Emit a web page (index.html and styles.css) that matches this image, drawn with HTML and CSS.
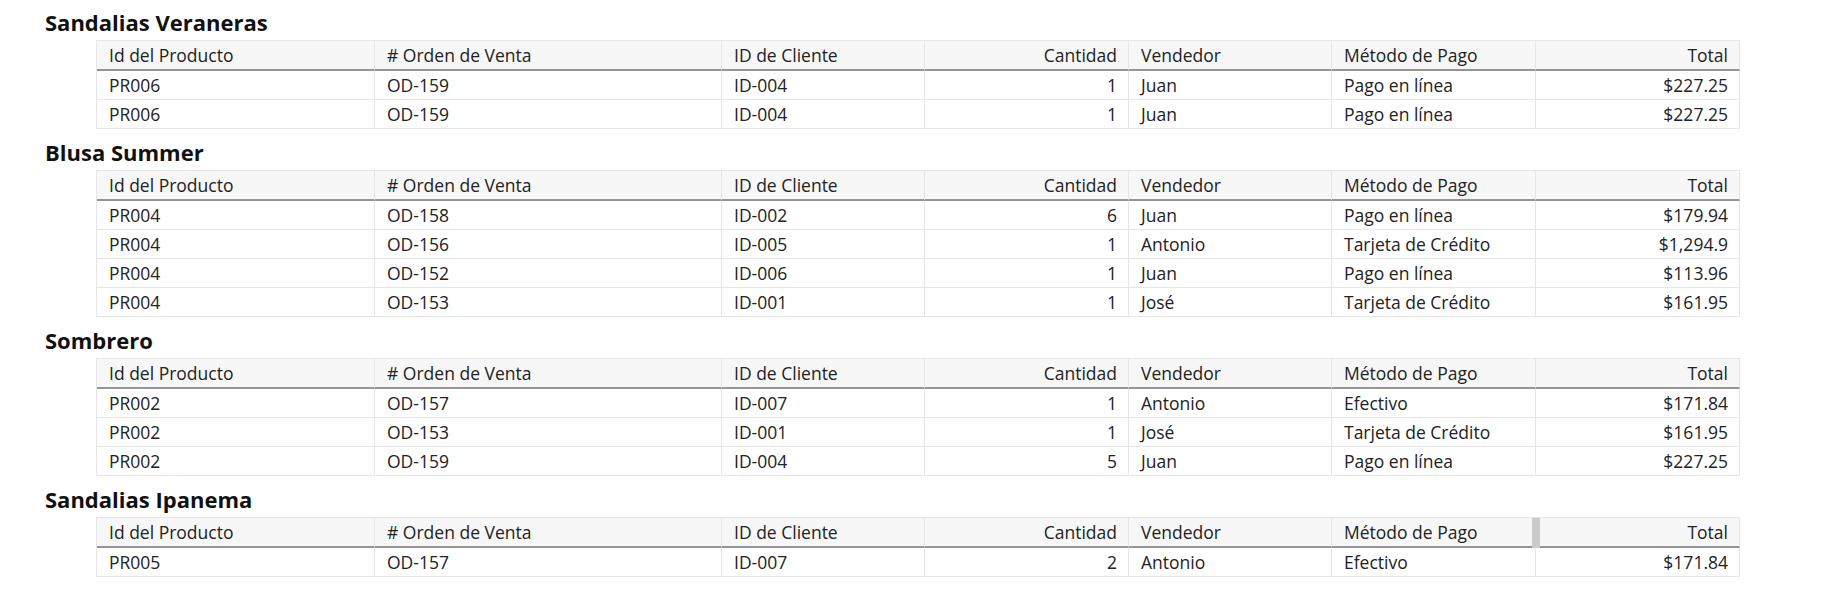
FILE: index.html
```html
<!DOCTYPE html>
<html lang="es">
<head>
<meta charset="utf-8">
<title>Ventas por producto</title>
<link rel="stylesheet" href="styles.css">
</head>
<body>
<main class="report">
  <section class="group">
    <h2 class="group-title">Sandalias Veraneras</h2>
    <table class="grid">
      <colgroup><col class="c1"><col class="c2"><col class="c3"><col class="c4"><col class="c5"><col class="c6"><col class="c7"></colgroup>
      <thead><tr><th>Id del Producto</th><th># Orden de Venta</th><th>ID de Cliente</th><th class="num">Cantidad</th><th>Vendedor</th><th>Método de Pago</th><th class="num">Total</th></tr></thead>
      <tbody>
        <tr><td>PR006</td><td>OD-159</td><td>ID-004</td><td class="num">1</td><td>Juan</td><td>Pago en línea</td><td class="num">$227.25</td></tr>
        <tr><td>PR006</td><td>OD-159</td><td>ID-004</td><td class="num">1</td><td>Juan</td><td>Pago en línea</td><td class="num">$227.25</td></tr>
      </tbody>
    </table>
  </section>
  <section class="group">
    <h2 class="group-title">Blusa Summer</h2>
    <table class="grid">
      <colgroup><col class="c1"><col class="c2"><col class="c3"><col class="c4"><col class="c5"><col class="c6"><col class="c7"></colgroup>
      <thead><tr><th>Id del Producto</th><th># Orden de Venta</th><th>ID de Cliente</th><th class="num">Cantidad</th><th>Vendedor</th><th>Método de Pago</th><th class="num">Total</th></tr></thead>
      <tbody>
        <tr><td>PR004</td><td>OD-158</td><td>ID-002</td><td class="num">6</td><td>Juan</td><td>Pago en línea</td><td class="num">$179.94</td></tr>
        <tr><td>PR004</td><td>OD-156</td><td>ID-005</td><td class="num">1</td><td>Antonio</td><td>Tarjeta de Crédito</td><td class="num">$1,294.9</td></tr>
        <tr><td>PR004</td><td>OD-152</td><td>ID-006</td><td class="num">1</td><td>Juan</td><td>Pago en línea</td><td class="num">$113.96</td></tr>
        <tr><td>PR004</td><td>OD-153</td><td>ID-001</td><td class="num">1</td><td>José</td><td>Tarjeta de Crédito</td><td class="num">$161.95</td></tr>
      </tbody>
    </table>
  </section>
  <section class="group">
    <h2 class="group-title">Sombrero</h2>
    <table class="grid">
      <colgroup><col class="c1"><col class="c2"><col class="c3"><col class="c4"><col class="c5"><col class="c6"><col class="c7"></colgroup>
      <thead><tr><th>Id del Producto</th><th># Orden de Venta</th><th>ID de Cliente</th><th class="num">Cantidad</th><th>Vendedor</th><th>Método de Pago</th><th class="num">Total</th></tr></thead>
      <tbody>
        <tr><td>PR002</td><td>OD-157</td><td>ID-007</td><td class="num">1</td><td>Antonio</td><td>Efectivo</td><td class="num">$171.84</td></tr>
        <tr><td>PR002</td><td>OD-153</td><td>ID-001</td><td class="num">1</td><td>José</td><td>Tarjeta de Crédito</td><td class="num">$161.95</td></tr>
        <tr><td>PR002</td><td>OD-159</td><td>ID-004</td><td class="num">5</td><td>Juan</td><td>Pago en línea</td><td class="num">$227.25</td></tr>
      </tbody>
    </table>
  </section>
  <section class="group">
    <h2 class="group-title">Sandalias Ipanema</h2>
    <table class="grid">
      <colgroup><col class="c1"><col class="c2"><col class="c3"><col class="c4"><col class="c5"><col class="c6"><col class="c7"></colgroup>
      <thead><tr><th>Id del Producto</th><th># Orden de Venta</th><th>ID de Cliente</th><th class="num">Cantidad</th><th>Vendedor</th><th class="resizable">Método de Pago<span class="resize-handle"></span></th><th class="num">Total</th></tr></thead>
      <tbody>
        <tr><td>PR005</td><td>OD-157</td><td>ID-007</td><td class="num">2</td><td>Antonio</td><td>Efectivo</td><td class="num">$171.84</td></tr>
      </tbody>
    </table>
  </section>
</main>
</body>
</html>
```
FILE: styles.css
```css
html, body {
  margin: 0;
  padding: 0;
  background: #ffffff;
}

body {
  font-family: "Open Sans", "Noto Sans", "Liberation Sans", sans-serif;
  color: #222222;
}

.report {
  display: flex;
  flex-direction: column;
}

.group + .group {
  margin-top: 1px;
}

.group-title {
  margin: 0;
  padding: 4px 0 0 45px;
  height: 36px;
  line-height: 36px;
  font-size: 22px;
  font-weight: 700;
  color: #111111;
}

.grid {
  margin-left: 96px;
  width: 1644px;
  table-layout: fixed;
  border-collapse: separate;
  border-spacing: 0;
  border-top: 1px solid #e6e6e6;
  border-left: 1px solid #e6e6e6;
  font-size: 17.5px;
}

.c1 { width: 278px; }
.c2 { width: 347px; }
.c3 { width: 203px; }
.c4 { width: 204px; }
.c5 { width: 203px; }
.c6 { width: 204px; }
.c7 { width: 204px; }

.grid th,
.grid td {
  box-sizing: border-box;
  padding: 0 12px;
  height: 29px;
  line-height: 28px;
  text-align: left;
  font-weight: 400;
  white-space: nowrap;
  overflow: hidden;
  border-right: 1px solid #e6e6e6;
  border-bottom: 1px solid #e6e6e6;
}

.grid th {
  height: 30px;
  background: #f7f7f7;
  border-bottom: 2px solid #959595;
}

.grid .num {
  text-align: right;
  padding-right: 11px;
}

.grid th.resizable {
  position: relative;
  overflow: visible;
}

.resize-handle {
  position: absolute;
  top: 0;
  bottom: -2px;
  right: -5px;
  width: 8px;
  background: #cbcbcb;
}
```
